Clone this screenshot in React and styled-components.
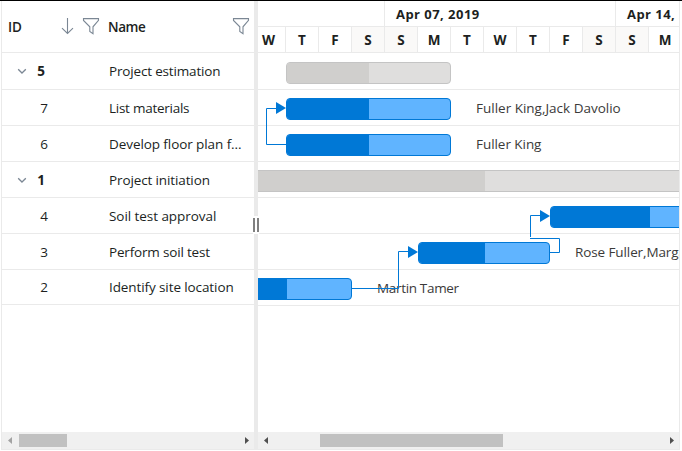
import React from "react";
import styled, { createGlobalStyle } from "styled-components";

const LINE = "#eaeaea";
const BLUE = "#0078d6";

const GlobalStyle = createGlobalStyle`
  * { box-sizing: border-box; }
  body {
    margin: 0;
    background: #fff;
    color: #201f1e;
    font-family: "Open Sans", "Noto Sans", sans-serif;
    font-size: 13.5px;
    overflow: hidden;
  }
`;

const Gantt = styled.main`
  display: flex;
  width: 679px;
  height: 450px;
  margin-left: 1px;
  border: 1px solid ${LINE};
  border-top-color: #000;
`;

const TopEdge = styled.div`
  position: absolute;
  inset: 0 0 auto 0;
  height: 1px;
  background: #000;
`;

const Pane = styled.section`
  display: flex;
  flex-direction: column;
  width: ${(p) => p.$width}px;
  overflow: hidden;
`;

const PaneBody = styled.div`
  position: relative;
  flex: 1;
`;

const Text = styled.span`
  white-space: pre;
  line-height: 20px;
  letter-spacing: ${(p) => p.$spacing || 0}px;
`;

const GridHeader = styled.header`
  display: grid;
  grid-template-columns: 52px 22px 26px 124px 1fr;
  align-items: center;
  height: 52px;
  padding-left: 6px;
  border-bottom: 1px solid ${LINE};
  font-weight: 600;
`;

const GridRow = styled.div`
  display: grid;
  grid-template-columns: 12px 21px 58px 1fr;
  align-items: center;
  height: ${(p) => p.$height}px;
  padding-left: 14px;
  border-bottom: 1px solid ${LINE};
`;

const IdCell = styled(Text)`
  grid-column: 2;
  text-align: right;
  padding-right: ${(p) => (p.$parent ? 4 : 1)}px;
  font-weight: ${(p) => (p.$parent ? 700 : 400)};
`;

const NameCell = styled(Text)`
  grid-column: 4;
  padding-left: 2px;
`;

const Icon = styled.svg`
  display: block;
  fill: none;
  stroke: #7b8794;
  stroke-width: 1.1;
`;

const Chevron = styled(Icon)`
  grid-row: 1;
  grid-column: 1;
  margin-left: 1px;
  stroke-width: 1.3;
`;

const SplitBar = styled.div`
  flex: none;
  width: 4px;
  height: 449px;
  background: ${LINE};
`;

const SplitHandle = styled.div`
  display: flex;
  justify-content: space-between;
  position: relative;
  z-index: 2;
  width: 6px;
  height: 18px;
  margin: 215px 0 0 -1px;
  padding: 2px 0;
  background: #fff;
`;

const Grip = styled.i`
  width: 2px;
  background: #808080;
`;

const Weeks = styled.div`
  display: grid;
  grid-template-columns: 127px 231px 1fr;
  height: 26px;
  border-bottom: 1px solid ${LINE};
`;

const Week = styled.div`
  padding: 3px 0 0 11px;
  border-right: 1px solid ${LINE};
  font-weight: 700;
  font-size: 13px;
  overflow: hidden;
  &:last-child { border-right: 0; }
`;

const Days = styled.div`
  display: grid;
  grid-template-columns: 28px repeat(11, 33px) 33px;
  height: 26px;
  border-bottom: 1px solid ${LINE};
`;

const Day = styled.div`
  display: flex;
  justify-content: ${(p) => (p.$first ? "flex-start" : "center")};
  align-items: center;
  padding-left: ${(p) => (p.$first ? 4 : 0)}px;
  border-right: 1px solid ${LINE};
  background: ${(p) => (p.$off ? "#faf9f8" : "#fff")};
  font-weight: 700;
`;

const ChartRow = styled.div`
  height: ${(p) => p.$height}px;
  border-bottom: 1px solid ${LINE};
`;

const Bar = styled.div`
  position: absolute;
  top: ${(p) => p.$top}px;
  left: ${(p) => p.$left}px;
  width: ${(p) => p.$width}px;
  height: 22px;
  border: 1px solid ${(p) => (p.$parent ? "#c4c4c4" : BLUE)};
  border-radius: 4px;
  background: ${(p) => (p.$parent ? "#dfdedd" : "#60b4ff")};
  overflow: hidden;
`;

const Progress = styled.div`
  width: ${(p) => p.$width}px;
  height: 100%;
  background: ${(p) => (p.$parent ? "#d0cfcd" : BLUE)};
`;

const BarLabel = styled(Text)`
  position: absolute;
  top: ${(p) => p.$top}px;
  left: ${(p) => p.$left}px;
  color: #3b3a39;
`;

const Links = styled.svg`
  position: absolute;
  inset: 0;
  fill: none;
  stroke: ${BLUE};
`;

const ScrollTrack = styled.div`
  display: flex;
  align-items: center;
  height: 17px;
  padding: 0 5px 0 6px;
  background: #f0f0f0;
`;

const ScrollArrow = styled.svg`
  flex: none;
  width: 4px;
  height: 7px;
  fill: ${(p) => (p.$muted ? "#a3a3a3" : "#505050")};
`;

const Thumb = styled.div`
  width: ${(p) => p.$width}px;
  height: 13px;
  margin-left: ${(p) => p.$offset}px;
  margin-right: auto;
  background: #c1c1c1;
`;

const tasks = [
  { id: "5", name: "Project estimation", parent: true, h: 37, s: -0.17 },
  { id: "7", name: "List materials", h: 36, s: -0.26 },
  { id: "6", name: "Develop floor plan f...", h: 36, s: -0.08 },
  { id: "1", name: "Project initiation", parent: true, h: 36, s: -0.12 },
  { id: "4", name: "Soil test approval", h: 36, s: -0.06 },
  { id: "3", name: "Perform soil test", h: 36, s: -0.18 },
  { id: "2", name: "Identify site location", h: 35, s: -0.1 },
];

const bars = [
  { top: 9, left: 28, width: 165, done: 82, parent: true },
  { top: 45, left: 28, width: 165, done: 82 },
  { top: 81, left: 28, width: 165, done: 82 },
  { top: 117, left: -10, width: 450, done: 236, parent: true },
  { top: 153, left: 292, width: 165, done: 99 },
  { top: 189, left: 160, width: 132, done: 66 },
  { top: 225, left: -38, width: 132, done: 66 },
];

const labels = [
  { top: 45, left: 218, text: "Fuller King,Jack Davolio", s: 0 },
  { top: 81, left: 218, text: "Fuller King", s: -0.05 },
  { top: 189, left: 317, text: "Rose Fuller,Margaret Buchanan", s: -0.1 },
  { top: 225, left: 119, text: "Martin Tamer", s: -0.33 },
];

const Filter = () => (
  <Icon width="18" height="17" viewBox="0 0 18 17">
    <path d="M1.5 .6h15v1.8L11 8.8v6.9l-3.2-2.2V8.8L1.5 2.4z" />
  </Icon>
);

const Scroll = ({ offset, width, muted }) => (
  <ScrollTrack>
    <ScrollArrow $muted={muted} viewBox="0 0 4 7"><path d="M4 0v7L0 3.5z" /></ScrollArrow>
    <Thumb $offset={offset} $width={width} />
    <ScrollArrow viewBox="0 0 4 7"><path d="M0 0v7l4-3.5z" /></ScrollArrow>
  </ScrollTrack>
);

export default function App() {
  return (
    <>
      <GlobalStyle />
      <TopEdge />
      <Gantt>
        <Pane $width={252}>
          <GridHeader>
            <Text>ID</Text>
            <Icon width="14" height="17" viewBox="0 0 14 17"><path d="M7.5 0v15M2 10.2l5.5 5.3 5.5-5.3" /></Icon>
            <Filter />
            <Text $spacing={-0.4}>Name</Text>
            <Filter />
          </GridHeader>
          <PaneBody>
            {tasks.map((t) => (
              <GridRow key={t.id} $height={t.h}>
                {t.parent && <Chevron width="10" height="8" viewBox="0 0 10 8"><path d="M1.2 2.2L5 6l3.8-3.8" /></Chevron>}
                <IdCell $parent={t.parent}>{t.id}</IdCell>
                <NameCell $spacing={t.s}>{t.name}</NameCell>
              </GridRow>
            ))}
          </PaneBody>
          <Scroll offset={7} width={48} muted />
        </Pane>
        <SplitBar>
          <SplitHandle><Grip /><Grip /></SplitHandle>
        </SplitBar>
        <Pane $width={421}>
          <Weeks>
            <Week />
            <Week><Text $spacing={0.46}>Apr 07, 2019</Text></Week>
            <Week><Text $spacing={0.46}>Apr 14, 2019</Text></Week>
          </Weeks>
          <Days>
            {"WTFSSMTWTFSSM".split("").map((d, i) => (
              <Day key={i} $first={i === 0} $off={d === "S"}>{d}</Day>
            ))}
          </Days>
          <PaneBody>
            {tasks.map((t, i) => <ChartRow key={t.id} $height={i ? 36 : 37} />)}
            {bars.map((b) => (
              <Bar key={b.top} $top={b.top} $left={b.left} $width={b.width} $parent={b.parent}>
                <Progress $width={b.done} $parent={b.parent} />
              </Bar>
            ))}
            {labels.map((l) => (
              <BarLabel key={l.text} $top={l.top} $left={l.left} $spacing={l.s}>{l.text}</BarLabel>
            ))}
            <Links width="421" height="260">
              <path d="M28 91.5H8.5V55.5H19M292 199.5H301.5V185.5H272M272.5 184V162.5H283M94 235.5H140.5V198.5H151" />
              <g fill={BLUE} stroke="none">
                <path d="M18 49v12l10-6z" />
                <path d="M282 157v12l10-6z" />
                <path d="M150 193v12l10-6z" />
              </g>
            </Links>
          </PaneBody>
          <Scroll offset={52} width={183} />
        </Pane>
      </Gantt>
    </>
  );
}
